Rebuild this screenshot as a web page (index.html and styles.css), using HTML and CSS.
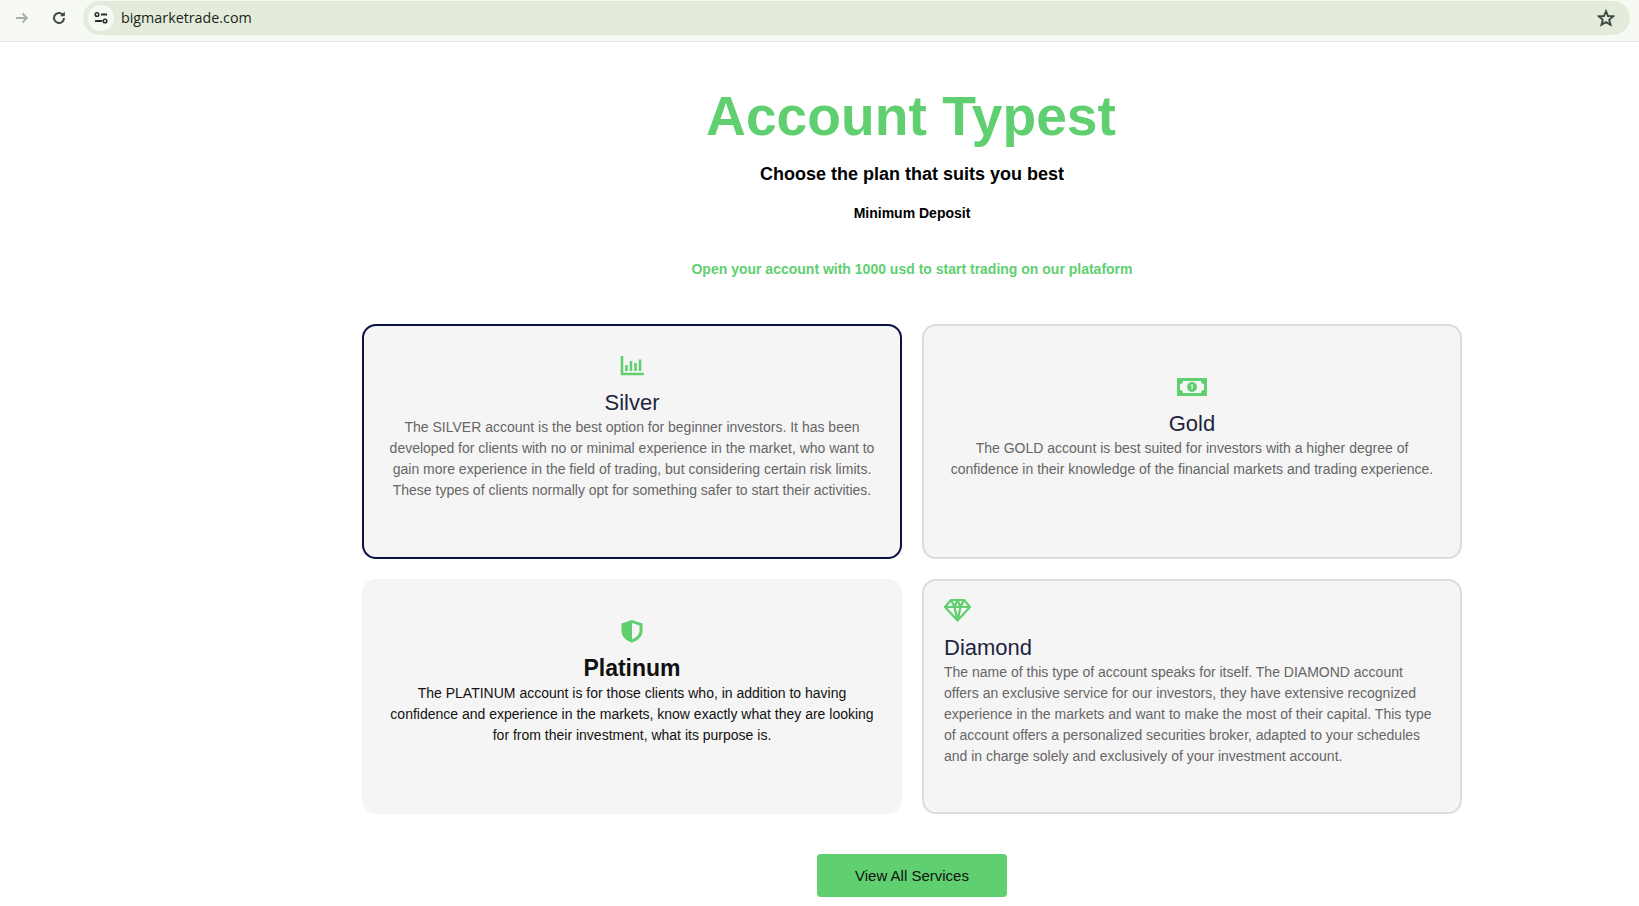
FILE: index.html
```html
<!DOCTYPE html>
<html lang="en">
<head>
    <meta charset="UTF-8">
    <meta name="viewport" content="width=device-width, initial-scale=1.0">
    <title>Account Types</title>
    <link rel="stylesheet" href="styles.css">
</head>
<body>

<div class="browser-bar">
    <svg class="nav-icon" width="16" height="16" viewBox="0 0 16 16"><path d="M2 8h11M8.500 3.500 13 8l-4.500 4.500" fill="none" stroke="#a9aea7" stroke-width="1.800"/></svg>
    <svg class="nav-icon reload" width="16" height="16" viewBox="0 0 16 16"><path d="M13 8a5 5 0 1 1-1.500-3.600" fill="none" stroke="#3d4a3f" stroke-width="2"/><path d="M13.800 1.500v4.700H9.100z" fill="#3d4a3f"/></svg>
    <div class="address">
        <span class="site-icon">
            <svg width="16" height="16" viewBox="0 0 16 16"><circle cx="4" cy="4.500" r="1.800" fill="none" stroke="#26302a" stroke-width="1.500"/><path d="M8 4.500h6M2 11h7" stroke="#26302a" stroke-width="1.800"/><circle cx="12" cy="11" r="1.800" fill="none" stroke="#26302a" stroke-width="1.500"/></svg>
        </span>
        <span class="url">bigmarketrade.com</span>
        <svg class="star" width="18" height="18" viewBox="0 0 18 18"><path d="M9 2.200 11 7l5.200.4-4 3.400 1.300 5L9 13.100l-4.500 2.700 1.300-5-4-3.400L7 7z" fill="none" stroke="#3d4a3f" stroke-width="1.900"/></svg>
    </div>
</div>

<div class="page">
    <div class="intro">
        <h1>Account Typest</h1>
        <h2>Choose the plan that suits you best</h2>
        <p class="min-deposit">Minimum Deposit</p>
        <p class="open-note">Open your account with 1000 usd to start trading on our plataform</p>
    </div>

    <div class="plans">
        <div class="plan plan-silver">
            <svg class="plan-icon" width="24" height="24" viewBox="0 0 24 24"><path d="M2 3v18h22" fill="none" stroke="#5fcf70" stroke-width="2.600"/><path d="M6.500 12v6M11 8v10M15.500 10v8M20 6.500V18" stroke="#5fcf70" stroke-width="2.600"/></svg>
            <h3>Silver</h3>
            <p>The SILVER account is the best option for beginner investors. It has been developed for clients with no or minimal experience in the market, who want to gain more experience in the field of trading, but considering certain risk limits. These types of clients normally opt for something safer to start their activities.</p>
        </div>
        <div class="plan plan-gold">
            <svg class="plan-icon" width="30" height="24" viewBox="0 -1 30 24"><path fill-rule="evenodd" d="M1 3h28a1 1 0 0 1 1 1v16a1 1 0 0 1-1 1H1a1 1 0 0 1-1-1V4a1 1 0 0 1 1-1zm5 3a3 3 0 0 1-3 3v6a3 3 0 0 1 3 3h18a3 3 0 0 1 3-3V9a3 3 0 0 1-3-3z" fill="#5fcf70"/><circle cx="15" cy="12" r="5" fill="#5fcf70"/><path d="M14 10.500 15.200 10v4" fill="none" stroke="#f5f5f5" stroke-width="1.200"/></svg>
            <h3>Gold</h3>
            <p>The GOLD account is best suited for investors with a higher degree of confidence in their knowledge of the financial markets and trading experience.</p>
        </div>
        <div class="plan plan-platinum">
            <svg class="plan-icon" width="24" height="24" viewBox="0 0 24 24"><path fill-rule="evenodd" d="M12 1 22.500 4.500V12c0 5.500-4.500 9.500-10.500 11.500C6 21.500 1.500 17.500 1.500 12V4.500zm0 3v16.300c4-1.600 7.500-4.600 7.500-8.300V6.500z" fill="#5fcf70"/></svg>
            <h3>Platinum</h3>
            <p>The PLATINUM account is for those clients who, in addition to having confidence and experience in the markets, know exactly what they are looking for from their investment, what its purpose is.</p>
        </div>
        <div class="plan plan-diamond">
            <svg class="plan-icon" width="27" height="24" viewBox="0 0 27 24"><path d="M7 2h13l6 7-12.500 13.500L1 9zM1 9h25M7 2l3.500 7 3 13.500L16.500 9 20 2M10.500 9 13.500 2l3 7" fill="none" stroke="#5fcf70" stroke-width="2.200" stroke-linejoin="round"/></svg>
            <h3>Diamond</h3>
            <p>The name of this type of account speaks for itself. The DIAMOND account offers an exclusive service for our investors, they have extensive recognized experience in the markets and want to make the most of their capital. This type of account offers a personalized securities broker, adapted to your schedules and in charge solely and exclusively of your investment account.</p>
        </div>
    </div>

    <div class="actions">
        <button class="all-services">View All Services</button>
    </div>
</div>

</body>
</html>
```

FILE: styles.css
```css
html, body {
    height: 906px;
    overflow: hidden;
}

body {
    margin: 0;
    font-family: "Liberation Sans", Arial, sans-serif;
    background-color: white;
    color: #111;
}

.browser-bar {
    height: 42px;
    box-sizing: border-box;
    display: flex;
    align-items: center;
    padding: 0 9px 6px 14px;
    background-color: #f6faf2;
    border-bottom: 1px solid #e3e8df;
}

.nav-icon {
    margin-right: 21px;
}

.reload {
    margin-right: 16px;
}

.address {
    flex: 1;
    height: 34px;
    display: flex;
    align-items: center;
    background-color: #e3ebda;
    border-radius: 17px;
    padding: 0 15px 0 5px;
}

.site-icon {
    width: 26px;
    height: 26px;
    border-radius: 50%;
    background-color: #f6faf2;
    display: flex;
    align-items: center;
    justify-content: center;
}

.url {
    flex: 1;
    margin-left: 7px;
    font-family: "Open Sans", sans-serif;
    font-size: 14.3px;
    color: #1d1f1c;
}

.page {
    width: 1100px;
    margin-left: 362px;
}

.intro {
    text-align: center;
    padding-top: 40px;
}

h1 {
    margin: 0;
    padding-right: 2px;
    font-size: 55.2px;
    line-height: 69px;
    color: #5fcf70;
}

h2 {
    margin: 11px 0 0;
    font-size: 18px;
    line-height: 24px;
    color: #000;
}

.min-deposit {
    margin: 17px 0 0;
    font-size: 14px;
    font-weight: bold;
    line-height: 20px;
    color: #000;
}

.open-note {
    margin: 36px 0 0;
    font-size: 14px;
    font-weight: bold;
    line-height: 20px;
    color: #5fcf70;
}

.plans {
    display: grid;
    grid-template-columns: 540px 540px;
    grid-auto-rows: 235px;
    gap: 20px;
    margin-top: 45px;
}

.plan {
    box-sizing: border-box;
    padding: 20px 20px 50px;
    display: flex;
    flex-direction: column;
    align-items: center;
    justify-content: center;
    text-align: center;
    background-color: #f5f5f5;
    border: 2px solid #dcdcdc;
    border-radius: 14px;
}

.plan-icon {
    flex-shrink: 0;
    margin-bottom: 11px;
}

.plan h3 {
    margin: 0;
    font-size: 22px;
    font-weight: normal;
    line-height: 29px;
    color: #1f2540;
}

.plan p {
    margin: 0;
    font-size: 14px;
    line-height: 21px;
    color: #666;
}

.plan-silver {
    border-color: #0b1140;
}

.plan-platinum {
    padding-bottom: 48px;
    border-color: #f5f5f5;
}

.plan-platinum h3 {
    font-size: 23px;
    font-weight: bold;
    color: #111;
}

.plan-platinum p {
    color: #111;
}

.plan-diamond {
    padding-bottom: 48px;
    align-items: flex-start;
    text-align: left;
}

.actions {
    margin-top: 40px;
    text-align: center;
}

.all-services {
    width: 190px;
    height: 43px;
    padding-bottom: 2px;
    border: none;
    border-radius: 4px;
    background-color: #5fcf70;
    color: #111;
    font-family: inherit;
    font-size: 15px;
    cursor: pointer;
}
```
